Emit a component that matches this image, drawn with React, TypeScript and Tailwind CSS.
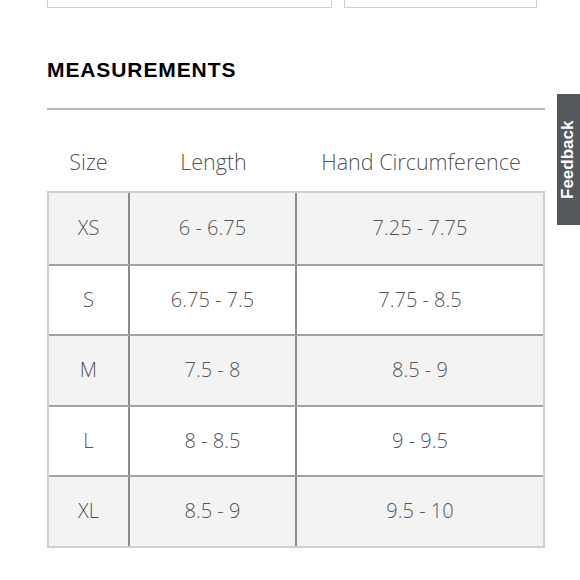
const rows = [
  { size: 'XS', length: '6 - 6.75', hand: '7.25 - 7.75' },
  { size: 'S', length: '6.75 - 7.5', hand: '7.75 - 8.5' },
  { size: 'M', length: '7.5 - 8', hand: '8.5 - 9' },
  { size: 'L', length: '8 - 8.5', hand: '9 - 9.5' },
  { size: 'XL', length: '8.5 - 9', hand: '9.5 - 10' },
]

export default function App() {
  return (
    <div className="relative h-[580px] w-[580px] overflow-hidden bg-white">
      <div className="pl-[47px]">
        <div className="flex gap-[12px]">
          <div className="h-[8px] w-[285px] border-x border-b border-[#cfcfcf]" />
          <div className="h-[8px] w-[193px] border-x border-b border-[#cfcfcf]" />
        </div>

        <h2
          className="mt-[48px] text-[21px] font-bold leading-[28px] tracking-[0.9px] text-black"
          style={{ fontFamily: '"Liberation Sans", Arial, sans-serif' }}
        >
          MEASUREMENTS
        </h2>

        <div className="mt-[24px] h-[2px] w-[498px] bg-[#b8b8b8]" />

        <div
          className="w-[498px] font-light text-[#555]"
          style={{ fontFamily: '"Open Sans", Lato, sans-serif' }}
        >
          <div className="grid h-[81px] grid-cols-[83px_167px_248px] items-end pb-[15px] text-[21.5px] leading-[28px]">
            <span className="text-center">Size</span>
            <span className="text-center">Length</span>
            <span className="text-center">Hand Circumference</span>
          </div>

          <div className="border-2 border-[#cfcfcf]">
            {rows.map((row, i) => (
              <div
                key={row.size}
                className={`grid h-[70.5px] grid-cols-[81px_167px_246px] items-center text-[20px] ${
                  i % 2 === 0 ? 'bg-[#f3f3f3]' : 'bg-white'
                } ${i > 0 ? 'border-t-2 border-[#a3a3a3]' : ''}`}
              >
                <span className="flex h-full items-center justify-center border-r-2 border-[#8a8a8a]">
                  {row.size}
                </span>
                <span className="flex h-full items-center justify-center border-r-2 border-[#8a8a8a]">
                  {row.length}
                </span>
                <span className="text-center">{row.hand}</span>
              </div>
            ))}
          </div>
        </div>
      </div>

      {/* feedback tab */}
      <div className="absolute right-0 top-[94px] flex h-[131px] w-[23px] items-center justify-center bg-[#54595d]">
        <span
          className="-rotate-90 whitespace-nowrap text-[17px] font-bold text-white"
          style={{ fontFamily: '"Liberation Sans", Arial, sans-serif' }}
        >
          Feedback
        </span>
      </div>
    </div>
  )
}
